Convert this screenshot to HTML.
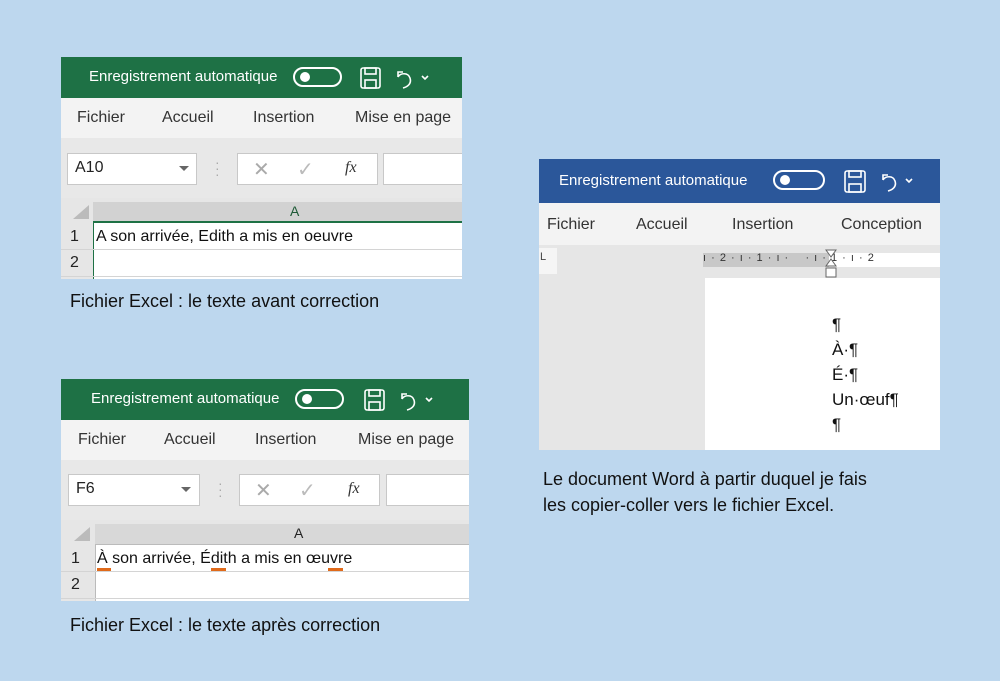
<!DOCTYPE html>
<html><head><meta charset="utf-8"><style>
*{margin:0;padding:0;box-sizing:border-box}
body{width:1000px;height:681px;background:#bdd7ee;position:relative;overflow:hidden;font-family:"Liberation Sans","DejaVu Sans",sans-serif}
.p{position:absolute;overflow:hidden;background:#f3f3f3}
.a{position:absolute;white-space:nowrap}
.hd{position:absolute;left:0;top:0;right:0;height:41px}
.t{color:#fff;font-size:15px}
.tog{position:absolute;width:49px;height:20px;border:2px solid #fff;border-radius:10px}
.tog:after{content:"";position:absolute;left:5px;top:3px;width:10px;height:10px;border-radius:50%;background:#fff}
.tab{font-size:16px;color:#333}
.cap{font-size:18px;color:#111}
</style></head><body>

<!-- Excel 1 -->
<div class="p" style="left:61px;top:57px;width:401px;height:222px">
 <div class="hd" style="background:#1e7145"></div>
 <div class="a t" style="left:28px;top:11px">Enregistrement automatique</div>
 <div class="tog" style="left:232px;top:10px"></div>
 <svg class="a" style="left:298px;top:9px" width="70" height="24" viewBox="0 0 70 24" fill="none" stroke="#fff" stroke-width="1.6"><rect x="2" y="2" width="19" height="20" rx="2"/><rect x="6" y="2" width="11" height="6"/><rect x="6" y="14" width="11" height="8"/><path d="M44 6h-5v5M39 11c2-4 10-5 12 1s-3 9-7 10"/><path d="M63 10l3 3 3-3"/></svg>
 <div class="a" style="left:0;top:41px;width:401px;height:40px;background:#f3f3f3"></div>
 <div class="a tab" style="left:16px;top:52px">Fichier</div>
 <div class="a tab" style="left:101px;top:52px">Accueil</div>
 <div class="a tab" style="left:192px;top:52px">Insertion</div>
 <div class="a tab" style="left:294px;top:52px">Mise en page</div>
 <div class="a" style="left:0;top:81px;width:401px;height:60px;background:#e8e8e8"></div>
 <div class="a" style="left:6px;top:96px;width:130px;height:32px;background:#fff;border:1px solid #c8c8c8"></div>
 <div class="a" style="left:14px;top:102px;font-size:16px;color:#222">A10</div>
 <div class="a" style="left:118px;top:109px;width:0;height:0;border-left:5px solid transparent;border-right:5px solid transparent;border-top:5px solid #666"></div>
 <div class="a" style="left:154px;top:102px;color:#aaa;font-size:14px;line-height:6px">·<br>·<br>·</div>
 <div class="a" style="left:176px;top:96px;width:141px;height:32px;background:#fff;border:1px solid #c8c8c8"></div>
 <div class="a" style="left:192px;top:100px;font-size:20px;color:#aaa">✕</div>
 <div class="a" style="left:236px;top:100px;font-size:20px;color:#bbb">✓</div>
 <div class="a" style="left:284px;top:102px;font-size:16px;font-style:italic;font-family:'Liberation Serif',serif;color:#333">fx</div>
 <div class="a" style="left:322px;top:96px;width:90px;height:32px;background:#fff;border:1px solid #c8c8c8"></div>
 <div class="a" style="left:0;top:141px;width:401px;height:25px;background:#e6e6e6"></div>
 <div class="a" style="left:12px;top:148px;width:0;height:0;border-left:16px solid transparent;border-bottom:14px solid #bbb"></div>
 <div class="a" style="left:32px;top:145px;width:369px;height:21px;background:#d2d2d2;border-bottom:2px solid #1e7145"></div>
 <div class="a" style="left:229px;top:146px;font-size:14px;color:#1e5a36">A</div>
 <div class="a" style="left:0;top:166px;width:32px;height:56px;background:#e6e6e6"></div>
 <div class="a" style="left:32px;top:166px;width:369px;height:56px;background:#fff;border-left:1px solid #1e7145"></div>
 <div class="a" style="left:0;top:192px;width:401px;height:1px;background:#d4d4d4"></div>
 <div class="a" style="left:0;top:219px;width:401px;height:1px;background:#d4d4d4"></div>
 <div class="a" style="left:9px;top:171px;font-size:16px;color:#222">1</div>
 <div class="a" style="left:9px;top:197px;font-size:16px;color:#222">2</div>
 <div class="a" style="left:35px;top:171px;font-size:16px;color:#111">A son arrivée, Edith a mis en oeuvre</div>
</div>
<div class="a cap" style="left:70px;top:291px">Fichier Excel : le texte avant correction</div>

<!-- Excel 2 -->
<div class="p" style="left:61px;top:379px;width:408px;height:222px">
 <div class="hd" style="background:#1e7145"></div>
 <div class="a t" style="left:30px;top:11px">Enregistrement automatique</div>
 <div class="tog" style="left:234px;top:10px"></div>
 <svg class="a" style="left:302px;top:9px" width="70" height="24" viewBox="0 0 70 24" fill="none" stroke="#fff" stroke-width="1.6"><rect x="2" y="2" width="19" height="20" rx="2"/><rect x="6" y="2" width="11" height="6"/><rect x="6" y="14" width="11" height="8"/><path d="M44 6h-5v5M39 11c2-4 10-5 12 1s-3 9-7 10"/><path d="M63 10l3 3 3-3"/></svg>
 <div class="a tab" style="left:17px;top:52px">Fichier</div>
 <div class="a tab" style="left:103px;top:52px">Accueil</div>
 <div class="a tab" style="left:194px;top:52px">Insertion</div>
 <div class="a tab" style="left:297px;top:52px">Mise en page</div>
 <div class="a" style="left:0;top:81px;width:408px;height:60px;background:#e8e8e8"></div>
 <div class="a" style="left:7px;top:95px;width:132px;height:32px;background:#fff;border:1px solid #c8c8c8"></div>
 <div class="a" style="left:15px;top:101px;font-size:16px;color:#222">F6</div>
 <div class="a" style="left:120px;top:108px;width:0;height:0;border-left:5px solid transparent;border-right:5px solid transparent;border-top:5px solid #666"></div>
 <div class="a" style="left:157px;top:101px;color:#aaa;font-size:14px;line-height:6px">·<br>·<br>·</div>
 <div class="a" style="left:178px;top:95px;width:141px;height:32px;background:#fff;border:1px solid #c8c8c8"></div>
 <div class="a" style="left:194px;top:99px;font-size:20px;color:#aaa">✕</div>
 <div class="a" style="left:238px;top:99px;font-size:20px;color:#bbb">✓</div>
 <div class="a" style="left:287px;top:101px;font-size:16px;font-style:italic;font-family:'Liberation Serif',serif;color:#333">fx</div>
 <div class="a" style="left:325px;top:95px;width:90px;height:32px;background:#fff;border:1px solid #c8c8c8"></div>
 <div class="a" style="left:0;top:141px;width:408px;height:25px;background:#e6e6e6"></div>
 <div class="a" style="left:13px;top:148px;width:0;height:0;border-left:16px solid transparent;border-bottom:14px solid #bbb"></div>
 <div class="a" style="left:34px;top:145px;width:374px;height:21px;background:#d8d8d8;border-bottom:1px solid #bbb"></div>
 <div class="a" style="left:233px;top:146px;font-size:14px;color:#222">A</div>
 <div class="a" style="left:0;top:166px;width:34px;height:56px;background:#e6e6e6"></div>
 <div class="a" style="left:34px;top:166px;width:374px;height:56px;background:#fff;border-left:1px solid #bbb"></div>
 <div class="a" style="left:0;top:192px;width:408px;height:1px;background:#d4d4d4"></div>
 <div class="a" style="left:0;top:219px;width:408px;height:1px;background:#d4d4d4"></div>
 <div class="a" style="left:10px;top:171px;font-size:16px;color:#222">1</div>
 <div class="a" style="left:10px;top:197px;font-size:16px;color:#222">2</div>
 <div class="a" style="left:36px;top:171px;font-size:16px;color:#111">À son arrivée, Édith a mis en œuvre</div>
 <div class="a" style="left:36px;top:189px;width:14px;height:3px;background:#e06a1a"></div>
 <div class="a" style="left:150px;top:189px;width:15px;height:3px;background:#e06a1a"></div>
 <div class="a" style="left:267px;top:189px;width:15px;height:3px;background:#e06a1a"></div>
</div>
<div class="a cap" style="left:70px;top:615px">Fichier Excel : le texte après correction</div>

<!-- Word -->
<div class="p" style="left:539px;top:159px;width:401px;height:291px;background:#e6e6e6">
 <div class="hd" style="background:#2b579a;height:44px"></div>
 <div class="a t" style="left:20px;top:13px">Enregistrement automatique</div>
 <div class="tog" style="left:234px;top:11px;width:52px"></div>
 <svg class="a" style="left:304px;top:10px" width="90" height="26" viewBox="0 0 90 26" fill="none" stroke="#fff" stroke-width="1.6"><rect x="2" y="2" width="20" height="21" rx="2"/><rect x="6" y="2" width="12" height="6"/><rect x="6" y="15" width="12" height="8"/><path d="M45 6h-5v5M40 11c2-4 10-5 12 1s-3 9-7 10"/><path d="M63 10l3 3 3-3"/></svg>
 <div class="a" style="left:0;top:44px;width:401px;height:42px;background:#f3f3f3"></div>
 <div class="a tab" style="left:8px;top:57px">Fichier</div>
 <div class="a tab" style="left:97px;top:57px">Accueil</div>
 <div class="a tab" style="left:193px;top:57px">Insertion</div>
 <div class="a tab" style="left:302px;top:57px">Conception</div>
 <div class="a" style="left:0;top:89px;width:18px;height:26px;background:#f5f5f5"></div>
 <div class="a" style="left:1px;top:92px;font-size:11px;color:#444">L</div>
 <div class="a" style="left:164px;top:94px;width:126px;height:14px;background:#c8c8c8"></div>
 <div class="a" style="left:290px;top:94px;width:111px;height:14px;background:#fff"></div>
 <div class="a" style="left:164px;top:93px;font-size:11px;color:#333;letter-spacing:1px">ı · 2 · ı · 1 · ı · &nbsp;&nbsp;&nbsp;· ı · 1 · ı · 2</div>
 <svg class="a" style="left:286px;top:90px" width="12" height="30" viewBox="0 0 12 30" fill="#fff" stroke="#666"><path d="M1 1h10L6 8zM6 10l5 7H1z"/><rect x="1" y="19" width="10" height="9"/></svg>
 <div class="a" style="left:166px;top:119px;width:235px;height:172px;background:#fff"></div>
 <div class="a" style="left:293px;top:153px;font-size:17px;color:#111;line-height:25px">¶<br>À·¶<br>É·¶<br>Un·œuf¶<br>¶</div>
</div>
<div class="a cap" style="left:543px;top:466px;line-height:26px">Le document Word à partir duquel je fais<br>les copier-coller vers le fichier Excel.</div>
</body></html>
